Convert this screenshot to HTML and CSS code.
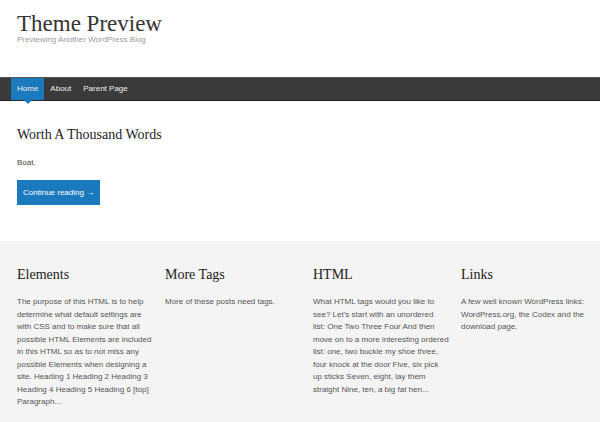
FILE: index.html
```html
<!DOCTYPE html>
<html lang="en">
<head>
  <meta charset="utf-8">
  <title>Theme Preview</title>
  <link rel="stylesheet" href="styles.css">
</head>
<body>

  <header class="site-header">
    <h1 class="site-title">Theme Preview</h1>
    <p class="site-tagline">Previewing Another WordPress Blog</p>
  </header>

  <nav class="main-nav">
    <ul>
      <li class="current"><a href="#">Home</a></li>
      <li><a href="#">About</a></li>
      <li><a href="#">Parent Page</a></li>
    </ul>
  </nav>

  <main class="content">
    <article class="post">
      <h2 class="post-title">Worth A Thousand Words</h2>
      <p>Boat.</p>
      <a class="more-link" href="#">Continue reading &rarr;</a>
    </article>
  </main>

  <footer class="widgets">
    <section class="widget">
      <h3>Elements</h3>
      <p>The purpose of this HTML is to help determine what default settings are with CSS and to make sure that all possible HTML Elements are included in this HTML so as to not miss any possible Elements when designing a site. Heading 1 Heading 2 Heading 3 Heading 4 Heading 5 Heading 6 [top] Paragraph...</p>
    </section>
    <section class="widget">
      <h3>More Tags</h3>
      <p>More of these posts need tags.</p>
    </section>
    <section class="widget">
      <h3>HTML</h3>
      <p>What HTML tags would you like to see? Let&rsquo;s start with an unordered<br>list: One Two Three Four And then move on to a more interesting ordered list: one, two buckle my shoe three, four knock at the door Five, six pick up sticks Seven, eight, lay them straight Nine, ten, a big fat hen...</p>
    </section>
    <section class="widget">
      <h3>Links</h3>
      <p>A few well known WordPress links: WordPress.org, the Codex and the download page.</p>
    </section>
  </footer>

</body>
</html>
```

FILE: styles.css
```css
/* Theme preview styles */
body {
  font-family: "Liberation Sans", Arial, sans-serif;
  font-size: 8px;
  line-height: 10px;
  color: #444;
  margin: 0;
  padding: 0;
  background: #fff;
}

.site-header {
  padding: 13px 17px 0;
  height: 64px;
}

.site-title {
  font-family: "Liberation Serif", serif;
  font-weight: normal;
  font-size: 23px;
  line-height: 22px;
  color: #333;
  margin: 0;
}

.site-tagline {
  margin: 0;
  color: #999;
}

.main-nav {
  background-color: #3a3a3a;
  border-top: 1px solid #555;
  border-bottom: 1px solid #262626;
  padding: 0 11px;
}

.main-nav ul {
  list-style: none;
  margin: 0;
  padding: 0;
  display: flex;
}

.main-nav li {
  position: relative;
}

.main-nav a {
  display: block;
  padding: 0 6px;
  line-height: 22px;
  color: #eee;
  text-decoration: none;
}

.main-nav .current a {
  background-color: #1b7abd;
}

.main-nav .current::after {
  content: "";
  position: absolute;
  left: 50%;
  top: 100%;
  margin-left: -4px;
  border: 4px solid transparent;
  border-top-color: #1b7abd;
  border-bottom: 0;
}

.content {
  padding: 26px 17px 36px;
}

.post-title {
  font-family: "Liberation Serif", serif;
  font-weight: normal;
  font-size: 14px;
  line-height: 16px;
  color: #222;
  margin: 0 0 15px;
}

.post p {
  margin: 0 0 12px;
}

.more-link {
  display: inline-block;
  background-color: #1b7abd;
  color: #fff;
  text-decoration: none;
  padding: 7px 6px;
  line-height: 11px;
}

.widgets {
  background-color: #f4f4f4;
  display: grid;
  grid-template-columns: repeat(4, 136px);
  gap: 12px;
  padding: 26px 17px 20px;
}

.widget h3 {
  font-family: "Liberation Serif", serif;
  font-weight: normal;
  font-size: 14px;
  line-height: 16px;
  color: #222;
  margin: 0 0 13px;
}

.widget p {
  margin: 0;
  font-size: 8px;
  line-height: 12.5px;
  color: #555;
}
```
